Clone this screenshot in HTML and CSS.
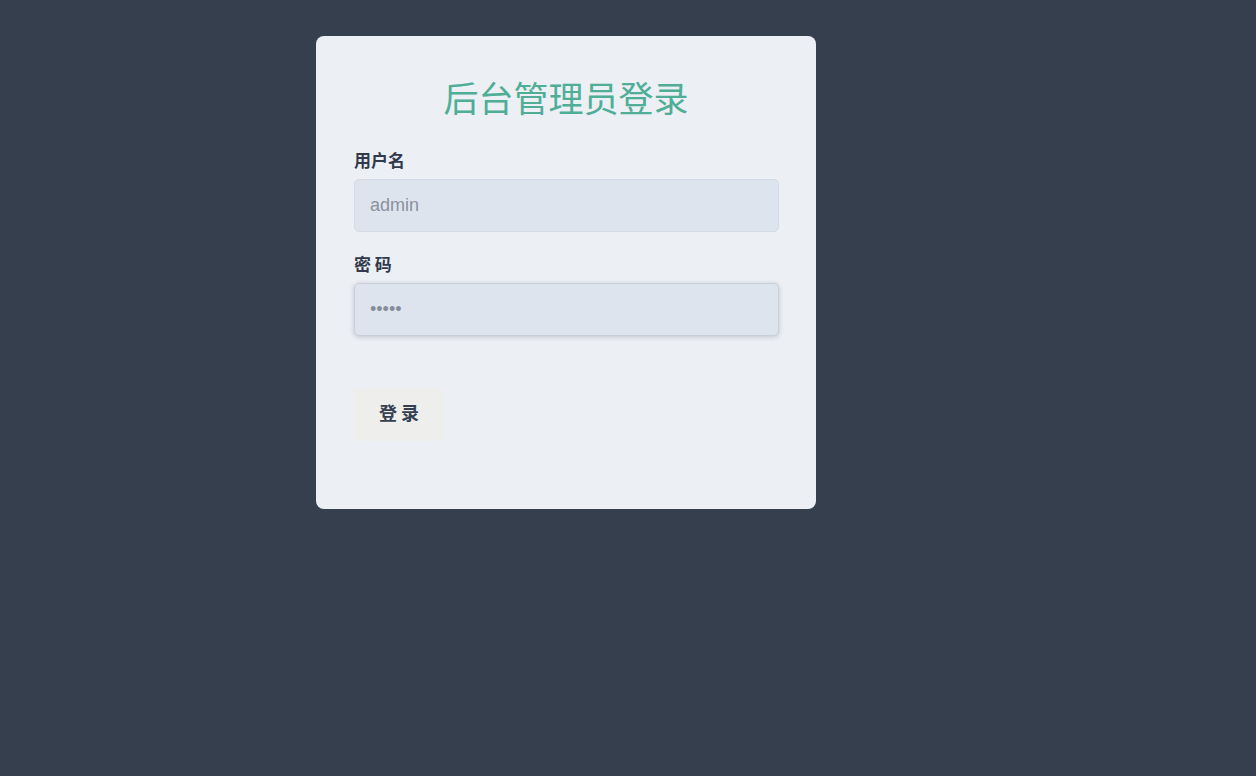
FILE: index.html
```html
<!DOCTYPE html>
<html lang="zh-CN">
<head>
<meta charset="utf-8">
<title>后台管理员登录</title>
<link rel="stylesheet" href="styles.css">
</head>
<body>
<div class="card">
  <h1 class="title">后台管理员登录</h1>
  <form class="form">
    <label class="label" for="u">用户名</label>
    <input class="input" id="u" type="text" placeholder="admin">
    <label class="label label-pw" for="p">密 码</label>
    <input class="input input-focus" id="p" type="password" value="12345" autofocus>
    <button class="btn" type="button">登 录</button>
  </form>
</div>
</body>
</html>
```

FILE: styles.css
```css
html, body {
  margin: 0;
  padding: 0;
  background: #363f4e;
  font-family: "Liberation Sans", "Noto Sans CJK SC", sans-serif;
}
.card {
  box-sizing: border-box;
  width: 500px;
  margin: 36px 0 0 316px;
  padding: 40px 38px 68px;
  background: #eceff4;
  border-radius: 8px;
}
.title {
  margin: 0;
  font-size: 35px;
  line-height: 42px;
  font-weight: normal;
  text-align: center;
  color: #4fae95;
  font-family: "Noto Sans CJK SC", sans-serif;
}
.form {
  display: flex;
  flex-direction: column;
  align-items: flex-start;
}
.label {
  margin-top: 31px;
  font-size: 17px;
  line-height: 22px;
  font-weight: bold;
  color: #303a4c;
  font-family: "Noto Sans CJK SC", sans-serif;
}
.label-pw {
  margin-top: 21px;
}
.input {
  box-sizing: border-box;
  width: 425px;
  height: 53px;
  margin-top: 8px;
  padding: 0 15px;
  background: #dee4ee;
  border: 1px solid #d5dbe6;
  border-radius: 5px;
  font-family: "Liberation Sans", sans-serif;
  font-size: 18px;
  color: #8a92a0;
  outline: none;
}
.input::placeholder {
  color: #8a92a0;
}
.input-focus {
  border-color: #c8cfdb;
  box-shadow: 0 1px 5px rgba(46, 52, 64, 0.22);
  font-size: 18px;
  color: #858d9b;
}
.btn {
  margin-top: 52px;
  width: 90px;
  height: 53px;
  padding: 0 0 6px;
  background: #eeefec;
  border: none;
  border-radius: 3px;
  font-family: "Noto Sans CJK SC", sans-serif;
  font-size: 18px;
  font-weight: bold;
  color: #363f52;
  cursor: pointer;
}
```
